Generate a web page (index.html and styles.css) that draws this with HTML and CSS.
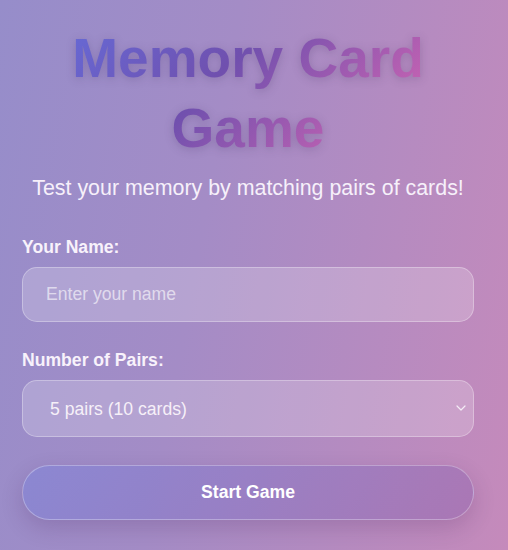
FILE: index.html
```html
<!DOCTYPE html>
<html lang="en">
<head>
<meta charset="utf-8">
<title>Memory Card Game</title>
<link rel="stylesheet" href="styles.css">
</head>
<body>
<main class="setup">
  <h1 class="title">Memory Card Game</h1>
  <p class="subtitle">Test your memory by matching pairs of cards!</p>
  <form class="form">
    <label class="label" for="name">Your Name:</label>
    <input class="field input" id="name" type="text" placeholder="Enter your name">
    <label class="label label-gap" for="pairs">Number of Pairs:</label>
    <div class="select-wrap">
      <select class="field select" id="pairs">
        <option>5 pairs (10 cards)</option>
        <option>8 pairs (16 cards)</option>
        <option>10 pairs (20 cards)</option>
      </select>
      <svg class="chevron" width="10" height="6" viewBox="0 0 10 6" aria-hidden="true"><path d="M1 1l4 4 4-4" fill="none" stroke="#f4ecf6" stroke-width="1.2" stroke-linecap="round" stroke-linejoin="round"/></svg>
    </div>
    <button class="start" type="button">Start Game</button>
  </form>
</main>
</body>
</html>
```
FILE: styles.css
```css
* { box-sizing: border-box; }
html, body { margin: 0; height: 100%; }
body {
  background: linear-gradient(100deg, #968dca 0%, #a48cc6 40%, #c58abb 100%);
  font-family: "Liberation Sans", Arial, sans-serif;
  color: #fff;
  overflow: hidden;
}
.setup {
  padding: 23px 34px 0 22px;
  display: flex;
  flex-direction: column;
}
.title {
  margin: 0;
  font-size: 55px;
  line-height: 70px;
  font-weight: 700;
  text-align: center;
  background: linear-gradient(135deg, #6470e0 0%, #7050ae 42%, #c262b2 78%, #d068b6 100%);
  -webkit-background-clip: text;
  background-clip: text;
  -webkit-text-fill-color: transparent;
  color: transparent;
  filter: drop-shadow(0 2px 5px rgba(40, 20, 70, 0.2));
}
.subtitle {
  margin: 13px 0 0;
  font-size: 21.4px;
  line-height: 24px;
  text-align: center;
  color: #f6f0fa;
}
.form {
  display: flex;
  flex-direction: column;
  margin-top: 37px;
}
.label {
  font-size: 17.6px;
  line-height: 20px;
  font-weight: 700;
  color: #f8f2fb;
  margin-bottom: 10px;
}
.label-gap { margin-top: 28px; }
.field {
  width: 100%;
  font-family: inherit;
  font-size: 17.6px;
  color: #f6f0f8;
  background: rgba(255, 255, 255, 0.2);
  border: 1px solid rgba(255, 255, 255, 0.3);
  border-radius: 15px;
  outline: none;
}
.input {
  height: 55px;
  padding: 0 23px;
}
.input::placeholder { color: rgba(255, 255, 255, 0.62); }
.select-wrap { position: relative; }
.select {
  height: 57px;
  padding: 0 27px;
  appearance: none;
  -webkit-appearance: none;
}
.chevron {
  position: absolute;
  right: 8px;
  top: 25px;
}
.start {
  margin-top: 28px;
  height: 55px;
  border-radius: 28px;
  border: 1px solid rgba(255, 255, 255, 0.3);
  background: linear-gradient(135deg, rgba(102, 126, 234, 0.3), rgba(118, 75, 162, 0.3));
  box-shadow: 0 8px 22px rgba(60, 20, 80, 0.18);
  color: #fff;
  font-family: inherit;
  font-size: 17.6px;
  font-weight: 700;
  cursor: pointer;
}
```
